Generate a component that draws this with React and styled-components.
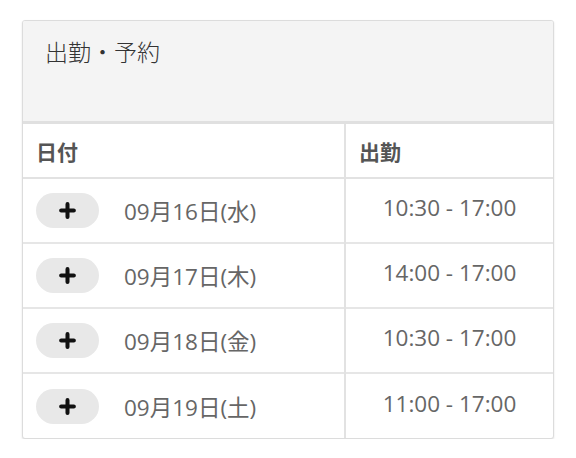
import React from 'react';
import styled, { createGlobalStyle } from 'styled-components';

const GlobalStyle = createGlobalStyle`
  body {
    margin: 0;
    background: #fff;
    font-family: "Open Sans", "Noto Sans CJK JP", sans-serif;
  }
`;

const Page = styled.div`
  padding: 20px 22px 0 22px;
  width: 576px;
  box-sizing: border-box;
`;

const Card = styled.div`
  width: 530px;
  border: 1px solid #dcdcdc;
  border-radius: 3px;
  box-shadow: 0 1px 2px rgba(0, 0, 0, 0.12);
  overflow: hidden;
  background: #fff;
`;

const CardHeader = styled.div`
  height: 103px;
  background: #f4f4f4;
  border-bottom: 3px solid #e0e0e0;
  padding: 13px 22px 0;
  box-sizing: border-box;
  font-size: 23px;
  color: #333;
  font-family: "Noto Sans CJK JP", sans-serif;
  font-weight: 300;
`;

const Table = styled.table`
  width: 100%;
  border-collapse: collapse;
  table-layout: fixed;
`;

const HeadCell = styled.th`
  box-sizing: border-box;
  height: 54px;
  text-align: left;
  padding: 0 13px;
  font-size: 21px;
  font-weight: 700;
  color: #555;
  font-family: "Noto Sans CJK JP", sans-serif;
  border-bottom: 2px solid #e2e2e2;
  border-left: ${(p) => (p.$divider ? '2px solid #e2e2e2' : 'none')};
  width: ${(p) => p.$width || 'auto'};
`;

const Row = styled.tr`
  height: 65px;
  border-top: ${(p) => (p.$first ? 'none' : '2px solid #e6e6e6')};
`;

const DateCell = styled.td`
  padding: 0 13px;
  vertical-align: middle;
`;

const DateWrap = styled.div`
  display: flex;
  align-items: center;
  gap: 25px;
`;

const AddButton = styled.button`
  width: 63px;
  height: 35px;
  border: none;
  border-radius: 18px;
  background: #e8e8e8;
  display: flex;
  align-items: center;
  justify-content: center;
  padding: 0;
  cursor: pointer;
`;

const DateText = styled.span`
  font-size: 22.5px;
  color: #666;
`;

const TimeCell = styled.td`
  border-left: 2px solid #e2e2e2;
  text-align: center;
  font-size: 22.5px;
  color: #666;
  padding: 0 0 6px;
  vertical-align: middle;
`;

const PlusIcon = () => (
  <svg width="17" height="17" viewBox="0 0 16 16">
    <path d="M8 2v12M2 8h12" stroke="#111" strokeWidth="3.8" strokeLinecap="round" />
  </svg>
);

const days = [
  { date: '09月16日(水)', time: '10:30 - 17:00' },
  { date: '09月17日(木)', time: '14:00 - 17:00' },
  { date: '09月18日(金)', time: '10:30 - 17:00' },
  { date: '09月19日(土)', time: '11:00 - 17:00' },
];

const App = () => (
  <Page>
    <GlobalStyle />
    <Card>
      <CardHeader>出勤・予約</CardHeader>
      <Table>
        <thead>
          <tr>
            <HeadCell $width="322px">日付</HeadCell>
            <HeadCell $divider>出勤</HeadCell>
          </tr>
        </thead>
        <tbody>
          {days.map((d, i) => (
            <Row key={d.date} $first={i === 0}>
              <DateCell>
                <DateWrap>
                  <AddButton>
                    <PlusIcon />
                  </AddButton>
                  <DateText>{d.date}</DateText>
                </DateWrap>
              </DateCell>
              <TimeCell>{d.time}</TimeCell>
            </Row>
          ))}
        </tbody>
      </Table>
    </Card>
  </Page>
);

export default App;
